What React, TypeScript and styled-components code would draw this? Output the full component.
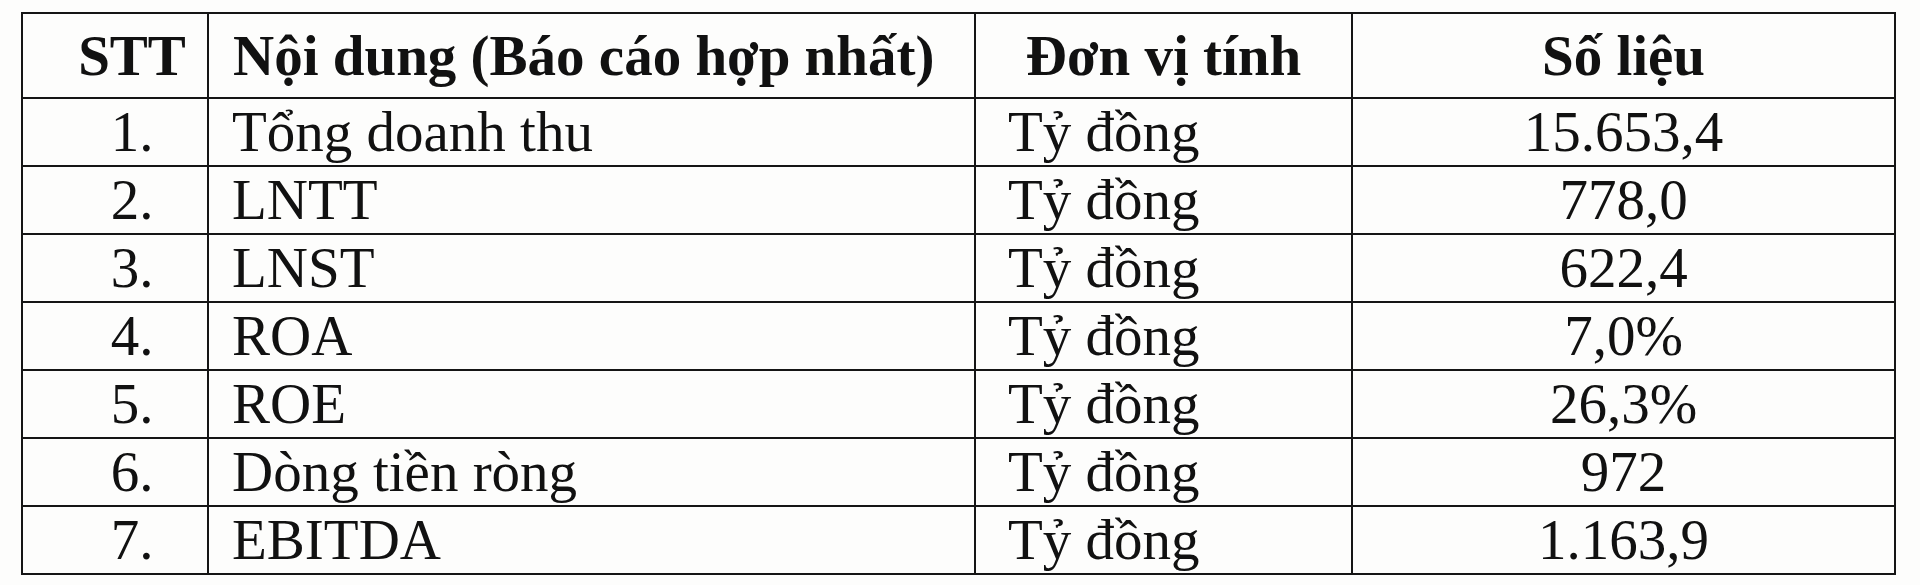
import styled, { createGlobalStyle } from "styled-components";

const GlobalStyle = createGlobalStyle`
  html, body {
    margin: 0;
    padding: 0;
    background: #fdfdfc;
  }
  body {
    font-family: "Liberation Serif", "Times New Roman", serif;
    color: #111;
  }
`;

const Page = styled.main`
  padding: 12px 0 0 21px;
  height: 585px;
  box-sizing: border-box;
  overflow: hidden;
`;

const Table = styled.table`
  border-collapse: collapse;
  table-layout: fixed;
  width: 1873px;
  font-size: 57px;
`;

const HeadCell = styled.th<{ $align?: "left" | "center"; $pl?: number }>`
  border: 2px solid #151515;
  height: 83px;
  padding: 0 0 0 ${(p) => p.$pl ?? 0}px;
  line-height: 83px;
  font-weight: 700;
  text-align: ${(p) => p.$align ?? "center"};
  white-space: nowrap;
`;

const Cell = styled.td<{ $align?: "left" | "center"; $pl?: number }>`
  border: 2px solid #151515;
  height: 66px;
  padding: 0 0 0 ${(p) => p.$pl ?? 0}px;
  line-height: 66px;
  text-align: ${(p) => p.$align ?? "left"};
  white-space: nowrap;
  overflow: hidden;
`;

const rows = [
  { no: "1.", name: "Tổng doanh thu", unit: "Tỷ đồng", value: "15.653,4" },
  { no: "2.", name: "LNTT", unit: "Tỷ đồng", value: "778,0" },
  { no: "3.", name: "LNST", unit: "Tỷ đồng", value: "622,4" },
  { no: "4.", name: "ROA", unit: "Tỷ đồng", value: "7,0%" },
  { no: "5.", name: "ROE", unit: "Tỷ đồng", value: "26,3%" },
  { no: "6.", name: "Dòng tiền ròng", unit: "Tỷ đồng", value: "972" },
  { no: "7.", name: "EBITDA", unit: "Tỷ đồng", value: "1.163,9" },
];

const App = () => {
  return (
    <>
      <GlobalStyle />
      <Page>
        <Table>
          <colgroup>
            <col style={{ width: 186 }} />
            <col style={{ width: 767 }} />
            <col style={{ width: 377 }} />
            <col style={{ width: 543 }} />
          </colgroup>
          <thead>
            <tr>
              <HeadCell $pl={34}>STT</HeadCell>
              <HeadCell $align="left" $pl={24}>
                Nội dung (Báo cáo hợp nhất)
              </HeadCell>
              <HeadCell>Đơn vị tính</HeadCell>
              <HeadCell>Số liệu</HeadCell>
            </tr>
          </thead>
          <tbody>
            {rows.map((r) => (
              <tr key={r.no}>
                <Cell $align="center" $pl={34}>
                  {r.no}
                </Cell>
                <Cell $pl={23}>{r.name}</Cell>
                <Cell $pl={32}>{r.unit}</Cell>
                <Cell $align="center">{r.value}</Cell>
              </tr>
            ))}
          </tbody>
        </Table>
      </Page>
    </>
  );
};

export default App;
